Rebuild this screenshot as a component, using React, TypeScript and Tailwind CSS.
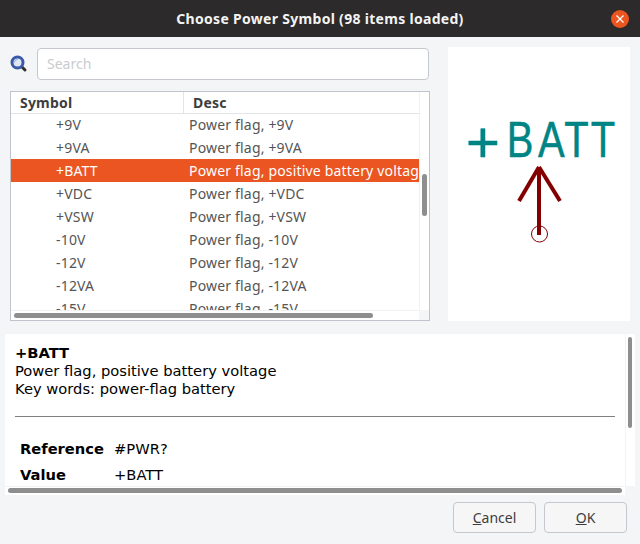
const rows = [
  ["+9V", "Power flag, +9V"],
  ["+9VA", "Power flag, +9VA"],
  ["+BATT", "Power flag, positive battery voltage"],
  ["+VDC", "Power flag, +VDC"],
  ["+VSW", "Power flag, +VSW"],
  ["-10V", "Power flag, -10V"],
  ["-12V", "Power flag, -12V"],
  ["-12VA", "Power flag, -12VA"],
  ["-15V", "Power flag, -15V"],
];

const SearchIcon = () => (
  <svg width="18" height="18" viewBox="0 0 18 18" className="shrink-0">
    <line x1="11.5" y1="11.5" x2="15" y2="15" stroke="#33302c" strokeWidth="3" strokeLinecap="round" />
    <circle cx="7.5" cy="7.5" r="5.5" fill="#dfe7f4" stroke="#3a5aa8" strokeWidth="3" />
    <path d="M4.5 7.5a3 3 0 0 1 3-3" fill="none" stroke="#8fa8dc" strokeWidth="1" />
  </svg>
);

const SymbolPreview = () => (
  <svg width="182" height="274" viewBox="448 47 182 274">
    <g fontFamily="'Liberation Sans', sans-serif" fill="#008484" stroke="#008484" strokeWidth="0.5">
      <text x="466" y="162" fontSize="58">
        +
      </text>
      <text x="0 39 72 105" y="0" fontSize="50" transform="translate(506.7 156.5) scale(0.8 1)">
        BATT
      </text>
    </g>
    <g stroke="#840000" strokeWidth="4" fill="none">
      <line x1="539" y1="168" x2="539" y2="235" />
      <line x1="539" y1="167" x2="519" y2="201" />
      <line x1="539" y1="167" x2="560" y2="201" />
    </g>
    <circle cx="539.5" cy="234" r="8" fill="none" stroke="#840000" strokeWidth="1" />
  </svg>
);

export default function App() {
  return (
    <div className="w-[640px] h-[544px] overflow-hidden bg-[#2c2a2a] font-['Noto_Sans',sans-serif]">
      <div className="h-[37px] bg-[#2c2a2a] rounded-t-lg flex items-center justify-center relative">
        <h1 className="text-[14px] font-bold text-[#f3f3f3] tracking-[0.3px]">
          Choose Power Symbol (98 items loaded)
        </h1>
        <div className="absolute left-[611px] top-[10px] w-[18px] h-[18px] rounded-full bg-[#ea5520] flex items-center justify-center">
          <svg width="10" height="10" viewBox="0 0 10 10">
            <path d="M1.5 1.5l7 7M8.5 1.5l-7 7" stroke="#fff" strokeWidth="1.3" />
          </svg>
        </div>
      </div>

      <div className="h-[507px] bg-[#f4f5f7] flex flex-col">
        <div className="flex h-[284px] pt-[10px] pl-[10px]">
          <div className="w-[420px] flex flex-col">
            <div className="flex items-center h-[33px] gap-[9px] mt-px">
              <SearchIcon />
              <input
                placeholder="Search"
                className="w-[392px] h-[32px] px-[9px] pb-[2px] bg-white border border-[#c5c8ce] rounded-[4px] text-[14px] placeholder:text-[#c9cbcd]"
              />
            </div>
            <div className="mt-[10px] h-[231px] border border-[#bfc3cb] bg-white flex flex-col relative">
              <div className="h-[22px] relative bg-white flex border-b border-[#e3e4e6] text-[14px] font-bold text-[#3d3d3d] leading-[22px] tracking-[0.2px] shrink-0 mr-[10px]">
                <div className="w-[173px] pl-[9px] border-r border-[#e3e4e6]">Symbol</div>
                <div className="pl-[9px]">Desc</div>
              </div>
              <div className="h-[197px] -mt-px overflow-hidden mr-[10px]">
                {rows.map(([sym, desc]) => {
                  const selected = sym === "+BATT";
                  return (
                    <div
                      key={sym}
                      className={`h-[23px] flex text-[14px] leading-[23px] tracking-[0.18px] whitespace-nowrap overflow-hidden ${
                        selected ? "bg-[#ea5522] text-white" : "text-[#555555]"
                      }`}
                    >
                      <div className="w-[178px] pl-[45px] shrink-0">{sym}</div>
                      <div>{desc}</div>
                    </div>
                  );
                })}
              </div>
              <div className="absolute right-0 top-0 bottom-0 w-[10px] border-l border-[#f0f0f0] bg-white" />
              <div className="absolute right-[2px] top-[82px] w-[5px] h-[42px] rounded-full bg-[#8e8e8e]" />
              <div className="absolute left-0 right-0 bottom-0 h-[10px] border-t border-[#f0f0f0] bg-white" />
              <div className="absolute right-0 bottom-0 w-[10px] h-[10px] bg-[#f4f5f7]" />
              <div className="absolute left-[3px] bottom-[2px] w-[359px] h-[5px] rounded-full bg-[#8e8e8e]" />
            </div>
          </div>
          <div className="w-[182px] h-[274px] ml-[18px] bg-white">
            <SymbolPreview />
          </div>
        </div>

        <div className="mt-[13px] ml-[5px] w-[630px] h-[161px] relative bg-white overflow-hidden font-['DejaVu_Sans',sans-serif] text-[14.7px] leading-[18px] text-black">
          <div className="pt-[10px] pl-[10px]">
            <p className="font-bold">+BATT</p>
            <p>Power flag, positive battery voltage</p>
            <p>Key words: power-flag battery</p>
            <hr className="w-[600px] mt-[18px] border-[#808080]" />
            <div className="mt-[23px] pl-[5px] grid grid-cols-[94px_1fr] gap-y-[8px]">
              <span className="font-bold">Reference</span>
              <span>#PWR?</span>
              <span className="font-bold">Value</span>
              <span>+BATT</span>
            </div>
          </div>
          <div className="absolute right-0 top-0 bottom-0 w-[10px] border-l border-[#f3f3f3] bg-white" />
          <div className="absolute right-[3px] top-[3px] w-[4px] h-[91px] rounded-full bg-[#8e8e8e]" />
          <div className="absolute left-0 right-0 bottom-0 h-[9px] border-t border-[#f3f3f3] bg-white" />
          <div className="absolute right-0 bottom-0 w-[10px] h-[9px] bg-[#f4f5f7]" />
          <div className="absolute left-[3px] bottom-[2px] w-[614px] h-[5px] rounded-full bg-[#8e8e8e]" />
        </div>

        <div className="flex justify-end gap-2 mt-[7px] pr-[13px]">
          <button className="w-[83px] h-[31px] bg-[#f6f6f7] border border-[#c4c7cc] rounded-[4px] text-[14px] text-[#3d3d3d]">
            <span className="underline">C</span>ancel
          </button>
          <button className="w-[83px] h-[31px] bg-[#f6f6f7] border border-[#c4c7cc] rounded-[4px] text-[14px] text-[#3d3d3d]">
            <span className="underline">O</span>K
          </button>
        </div>
      </div>
    </div>
  );
}
